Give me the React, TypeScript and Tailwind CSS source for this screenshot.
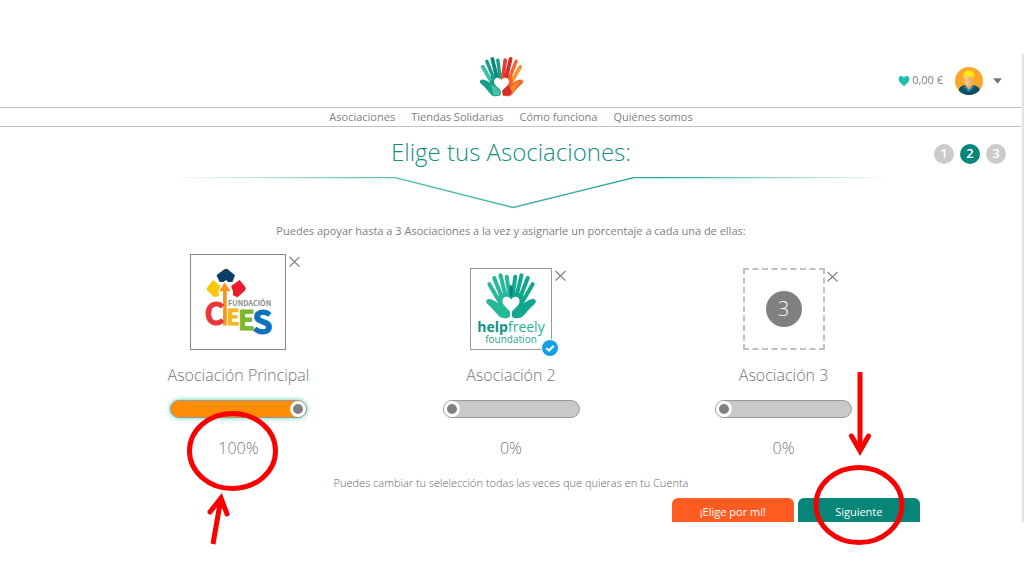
import { useState, type ReactNode } from "react";
import clsx from "clsx";

const navLinks = [
  "Asociaciones",
  "Tiendas Solidarias",
  "Cómo funciona",
  "Quiénes somos",
];

const steps = [1, 2, 3];
const currentStep = 2;

function HandShape() {
  return (
    <>
      <g fill="none" stroke="currentColor" strokeWidth="12" strokeLinecap="round">
        <path d="M12 34 L40 82" />
        <path d="M27 15 L51 76" />
        <path d="M46 7 L62 72" />
        <path d="M65 11 L73 70" />
      </g>
      <path
        fill="currentColor"
        d="M34 72 L50 62 L76 60 L78 70 V114 L75 120 C78 128 76 134 70 136 C60 139 48 138 42 132 C32 122 22 106 6 94 C-1 87 3 79 12 79 C24 80 32 88 39 91 Z"
      />
    </>
  );
}

function PalmHeart() {
  return (
    <path
      d="M78 122 C70 108 52 100 52 86 C52 70 72 68 78 82 C84 68 104 70 104 86 C104 100 86 108 78 122 Z M76.500 118 H79.500 L82 140 H74 Z"
      fill="#fff"
    />
  );
}

function BrandLogo() {
  return (
    <svg viewBox="0 0 156 140" className="h-10 w-[45px]" role="img" aria-label="helpfreely">
      <g color="#16a088">
        <HandShape />
        <path d="M12 34 L38 78" stroke="#3cbfa6" strokeWidth="12" strokeLinecap="round" />
        <path d="M46 7 L62 72" stroke="#0b8a7c" strokeWidth="12" strokeLinecap="round" />
        <path d="M42 96 L56 104 L72 120 L70 134 L50 134 Z" fill="#4cc3a4" />
      </g>
      <g color="#f4622d" transform="translate(156) scale(-1 1)">
        <HandShape />
        <path d="M12 34 L38 78" stroke="#fb9a2b" strokeWidth="12" strokeLinecap="round" />
        <path d="M46 7 L62 72" stroke="#d92b2b" strokeWidth="12" strokeLinecap="round" />
        <path d="M65 11 L72 66" stroke="#ee3d2c" strokeWidth="12" strokeLinecap="round" />
        <path d="M54 98 L76 118 L72 135 L48 134 L42 120 Z" fill="#d3312f" />
        <path d="M12 82 L36 94 L46 112 L40 126 Z" fill="#fb8a24" />
      </g>
      <PalmHeart />
    </svg>
  );
}

function HelpfreelyLogo() {
  return (
    <div className="flex flex-col items-center pt-1">
      <svg viewBox="0 0 156 140" className="h-[46px] w-[52px]" aria-hidden="true">
        <g color="#25b99a">
          <HandShape />
        </g>
        <g color="#10a78f" transform="translate(156) scale(-1 1)">
          <HandShape />
        </g>
        <path d="M73 44 L78 34 L83 44 L83 66 L78 74 L73 66 Z" fill="#078477" />
        <PalmHeart />
      </svg>
      <p className="text-[14px] leading-[16px] text-[#22b596]">
        <span className="font-bold text-[#0c9384]">help</span>
        <span className="font-medium">freely</span>
      </p>
      <p className="text-[10px] leading-[8px] text-[#1fa58c]">foundation</p>
    </div>
  );
}

function CieesLogo() {
  return (
    <svg
      viewBox="76 70 198 208"
      className="h-[69px] w-[66px] overflow-visible font-['Noto_Sans_CJK_SC','Open_Sans',sans-serif] font-bold"
      role="img"
      aria-label="Fundación CIEES"
    >
      <path d="M110 92 L134 74 Q139 71 144 74 L166 92 L158 112 L145 112 L139 106 L132 112 L120 112 Z" fill="#0d3f66" />
      <path d="M100 106 L122 124 L116 140 L118 154 L104 158 L82 138 Q78 132 84 126 Z" fill="#f9c80e" />
      <path d="M180 106 L196 126 Q201 132 196 138 L174 158 L160 152 L160 140 L154 124 Z" fill="#ec1c2d" />
      <path d="M135 114 L153 140 H141 V243 H130 V140 H118 Z" fill="#f7941d" />
      <text x="145" y="185" fontSize="22" fill="#8c8c8c">FUNDACIÓN</text>
      <text x="74" y="242" fontSize="92" fill="#e8343a" stroke="#e8343a" strokeWidth="3">C</text>
      <text x="140" y="241" fontSize="64" fill="#f5b51b" stroke="#f5b51b" strokeWidth="3">E</text>
      <text x="175" y="256" fontSize="82" fill="#7ab829" stroke="#7ab829" strokeWidth="3">E</text>
      <text x="218" y="270" fontSize="98" fill="#0b72bb" stroke="#0b72bb" strokeWidth="3">S</text>
    </svg>
  );
}

function Avatar() {
  return (
    <svg viewBox="0 0 84 84" className="size-7" aria-hidden="true">
      <clipPath id="avatar-clip">
        <circle cx="42" cy="42" r="42" />
      </clipPath>
      <g clipPath="url(#avatar-clip)">
        <rect width="84" height="84" fill="#fba72c" />
        <path d="M12 84 V66 Q14 58 28 55 H56 Q70 58 74 66 V84 Z" fill="#0c4f6d" />
        <path d="M32 50 H52 V60 L42 72 L32 60 Z" fill="#f0a860" />
        <path d="M30 55 L42 68 L54 55 L58 60 L44 74 H40 L26 60 Z" fill="#1f86a0" />
        <path d="M28 24 H54 V44 Q52 56 41 58 Q30 56 28 44 Z" fill="#fcc588" />
        <path d="M41 24 H54 V44 Q52 56 41 58 Z" fill="#f6b06d" />
        <path d="M25 36 Q22 18 34 12 Q48 8 56 18 Q60 26 56 36 L52 28 Q40 32 30 26 Z" fill="#fdea10" />
      </g>
    </svg>
  );
}

function Ribbon() {
  return (
    <svg viewBox="0 0 760 32" className="mx-auto block h-8 w-[760px] max-w-full" fill="none" aria-hidden="true">
      <defs>
        <linearGradient id="ribbon" gradientUnits="userSpaceOnUse" x1="0" y1="0" x2="760" y2="0">
          <stop offset="0.05" stopColor="#5cc4ae" stopOpacity="0" />
          <stop offset="0.32" stopColor="#5cc4ae" />
          <stop offset="0.7" stopColor="#22ab9a" />
          <stop offset="1" stopColor="#22ab9a" stopOpacity="0" />
        </linearGradient>
      </defs>
      <path d="M0 0.500 H264 L382 30.500 L503 0.500 H760" stroke="url(#ribbon)" strokeWidth="1.3" />
    </svg>
  );
}

function PercentMark() {
  return (
    <svg
      viewBox="180 400 116 150"
      className="pointer-events-none absolute -top-9 left-1/2 h-[150px] w-[116px] -translate-x-1/2"
      fill="none"
      stroke="#fa0000"
      strokeWidth="5"
      aria-hidden="true"
    >
      <ellipse cx="232.5" cy="451" rx="43" ry="37.5" />
      <path d="M213 544 L221 498" />
      <path d="M210 512 L221 498 L227 514" strokeLinecap="round" />
    </svg>
  );
}

function NextMark() {
  return (
    <svg
      viewBox="809 370 100 176"
      className="pointer-events-none absolute -bottom-6 left-1/2 h-44 w-[100px] -translate-x-1/2"
      fill="none"
      stroke="#fa0000"
      strokeWidth="5"
      aria-hidden="true"
    >
      <ellipse cx="859" cy="505" rx="43" ry="37.5" />
      <path d="M860 372 V450" />
      <path d="M851.5 436 L860 451 L868.5 436" strokeLinecap="round" />
    </svg>
  );
}

type SlotProps = {
  id: string;
  label: string;
  initial: number;
  boxClass: string;
  children: ReactNode;
  badge?: ReactNode;
  mark?: ReactNode;
};

function AssociationSlot({ id, label, initial, boxClass, children, badge, mark }: SlotProps) {
  const [value, setValue] = useState(initial);

  return (
    <div className="flex flex-col items-center">
      <div className={clsx("relative flex justify-center", boxClass)}>
        {children}
        {badge}
        <button
          type="button"
          aria-label={`Quitar ${label}`}
          className="absolute top-px left-full ml-1 size-[11px]"
        >
          <svg viewBox="0 0 11 11" className="size-full" stroke="#808080" strokeWidth="1.1">
            <path d="M0.5 1 L10.500 10.500 M10.500 1 L0.5 10.500" />
          </svg>
        </button>
      </div>
      <label htmlFor={id} className="mt-3 text-base leading-[26px] font-light text-[#777]">
        {label}
      </label>
      <input
        id={id}
        type="range"
        min={0}
        max={100}
        value={value}
        onChange={(event) => setValue(Number(event.target.value))}
        className={clsx(
          "mt-3 h-[18px] w-[137px] appearance-none rounded-full border border-[#999] [&::-webkit-slider-thumb]:size-4 [&::-webkit-slider-thumb]:appearance-none [&::-webkit-slider-thumb]:rounded-full [&::-webkit-slider-thumb]:border-3 [&::-webkit-slider-thumb]:border-white [&::-webkit-slider-thumb]:bg-[#808080]",
          value > 0
            ? "bg-[#ff8c05] shadow-[0_0_5px_#4fc9b5]"
            : "bg-[#c9c9c9]",
        )}
      />
      <div className="relative mt-[18px] w-full text-center">
        <output htmlFor={id} className="block text-base leading-6 font-light text-[#777]">
          {value}%
        </output>
        {mark}
      </div>
    </div>
  );
}

export default function App() {
  return (
    <div className="min-h-screen bg-white pt-[54px] font-['Open_Sans',sans-serif] text-[#808080]">
      <div className="border-r-2 border-[#e2e2e2]">
        <header>
          <div className="relative flex h-[53px] items-center justify-center">
            <a href="#inicio" className="block pr-5 pb-2">
              <BrandLogo />
            </a>
            <div className="absolute inset-y-0 right-5 flex items-center">
              <svg viewBox="0 0 24 22" className="h-[10px] w-3" fill="#1cc2a8" aria-hidden="true">
                <path d="M12 22 C5 16 0 12 0 6.500 C0 -1 9 -2 12 4 C15 -2 24 -1 24 6.500 C24 12 19 16 12 22 Z" />
              </svg>
              <span className="ml-0.5 text-[11px]">0,00 €</span>
              <button type="button" aria-label="Mi cuenta" className="ml-3 flex items-center gap-2.5">
                <Avatar />
                <svg viewBox="0 0 10 6" className="h-1.5 w-[9px]" fill="#777">
                  <path d="M0 0 H10 L5 6 Z" />
                </svg>
              </button>
            </div>
          </div>
          <nav className="flex h-5 items-center justify-center gap-4 border-y border-[#c4c4c4] text-[11px]">
            {navLinks.map((link) => (
              <a key={link} href="#menu">
                {link}
              </a>
            ))}
          </nav>
        </header>

        <main>
          <div className="relative">
            <h1 className="text-center text-[24px] leading-[50px] font-light text-[#0f9080]">
              Elige tus Asociaciones:
            </h1>
            <ol className="absolute inset-y-0 right-4 flex items-center gap-1.5 pt-1">
              {steps.map((step) => (
                <li
                  key={step}
                  className={clsx(
                    "flex size-5 items-center justify-center rounded-full text-[13px] font-semibold text-white",
                    step === currentStep ? "bg-[#078579]" : "bg-[#cbcbcb]",
                  )}
                >
                  {step}
                </li>
              ))}
            </ol>
          </div>
          <Ribbon />
          <p className="mt-3 text-center text-[11px] leading-5">
            Puedes apoyar hasta a 3 Asociaciones a la vez y asignarle un porcentaje a cada una de ellas:
          </p>

          <div className="mx-auto w-4/5">
            <div className="mt-[13px] grid grid-cols-3 items-end">
              <AssociationSlot
                id="principal"
                label="Asociación Principal"
                initial={100}
                boxClass="size-24 items-center border border-[#888]"
                mark={<PercentMark />}
              >
                <CieesLogo />
              </AssociationSlot>
              <AssociationSlot
                id="segunda"
                label="Asociación 2"
                initial={0}
                boxClass="size-[82px] border border-[#999]"
                badge={
                  <svg viewBox="0 0 18 18" className="absolute -right-2 -bottom-2 size-[18px]" aria-hidden="true">
                    <circle cx="9" cy="9" r="9" fill="#fff" />
                    <circle cx="9" cy="9" r="8" fill="#149fe6" />
                    <path d="M5.300 9.200 L8 11.600 L12.800 6.700" fill="none" stroke="#fff" strokeWidth="2.200" />
                  </svg>
                }
              >
                <HelpfreelyLogo />
              </AssociationSlot>
              <AssociationSlot
                id="tercera"
                label="Asociación 3"
                initial={0}
                boxClass="size-[82px] items-center border-2 border-dashed border-[#c2c2c2]"
              >
                <span className="flex size-9 items-center justify-center rounded-full bg-[#808080] text-xl font-light text-white">
                  3
                </span>
              </AssociationSlot>
            </div>

            <p className="mt-3 text-center text-[11px] leading-[22px] font-light text-[#666]">
              Puedes cambiar tu selelección todas las veces que quieras en tu Cuenta
            </p>
            <div className="mt-1 flex justify-end gap-1 text-[11px] text-white">
              <button type="button" className="h-6 w-[122px] rounded-t-md bg-[#ff5c22] pt-1">
                ¡Elige por mí!
              </button>
              <div className="relative">
                <button type="button" className="h-6 w-[122px] rounded-t-md bg-[#078579] pt-1">
                  Siguiente
                </button>
                <NextMark />
              </div>
            </div>
          </div>
        </main>
      </div>
    </div>
  );
}
